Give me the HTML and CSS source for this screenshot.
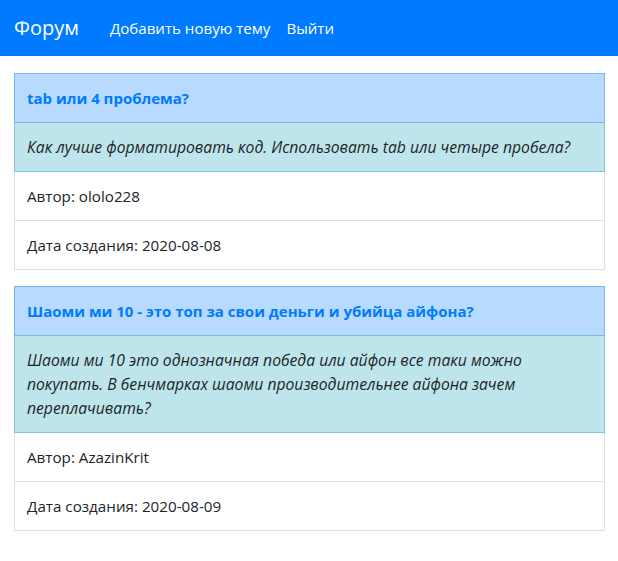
FILE: index.html
```html
<!DOCTYPE html>
<html lang="ru">
<head>
<meta charset="utf-8">
<title>Форум</title>
<link rel="stylesheet" href="styles.css">
</head>
<body>
<nav class="navbar">
  <a class="brand" href="#">Форум</a>
  <a class="nav-link" href="#">Добавить новую тему</a>
  <a class="nav-link" href="#">Выйти</a>
</nav>
<main class="container">
  <ul class="topic">
    <li class="item item-primary"><a class="title" href="#">tab или 4 проблема?</a></li>
    <li class="item item-info"><em>Как лучше форматировать код. Использовать tab или четыре пробела?</em></li>
    <li class="item">Автор: ololo228</li>
    <li class="item">Дата создания: 2020-08-08</li>
  </ul>
  <ul class="topic">
    <li class="item item-primary"><a class="title" href="#">Шаоми ми 10 - это топ за свои деньги и убийца айфона?</a></li>
    <li class="item item-info"><em>Шаоми ми 10 это однозначная победа или айфон все таки можно покупать. В бенчмарках шаоми производительнее айфона зачем переплачивать?</em></li>
    <li class="item">Автор: AzazinKrit</li>
    <li class="item">Дата создания: 2020-08-09</li>
  </ul>
</main>
</body>
</html>
```
FILE: styles.css
```css
* { box-sizing: border-box; }
body {
  margin: 0;
  font-family: "Open Sans", "Noto Sans", sans-serif;
  font-size: 15.2px;
  line-height: 24px;
  color: #212529;
  background: #fff;
}
a { text-decoration: none; }
.navbar {
  display: flex;
  align-items: center;
  height: 56px;
  padding: 0 14px;
  background: #007bff;
}
.brand {
  color: #fff;
  font-size: 20px;
  line-height: 30px;
  margin-right: 23px;
}
.nav-link {
  color: #fff;
  font-size: 15.1px;
  padding: 0 8px;
}
.nav-link:first-of-type { padding-left: 0; }
.container {
  padding: 17px 13px 0 14px;
}
.topic {
  list-style: none;
  margin: 0 0 16px;
  padding: 0;
}
.item {
  padding: 12px 12px;
  border: 1px solid rgba(0,0,0,.125);
  margin-top: -1px;
  background: #fff;
}
.item:first-child { margin-top: 0; }
.item-primary {
  background: #b8daff;
  border-color: #7ab6ec;
  position: relative;
  z-index: 1;
}
.item-info {
  background: #bee5eb;
  border-color: #86c5d9;
  position: relative;
}
.title {
  color: #007bff;
  font-weight: 700;
  font-size: 15px;
}
em {
  font-style: italic;
  font-size: 15.7px;
}
```
